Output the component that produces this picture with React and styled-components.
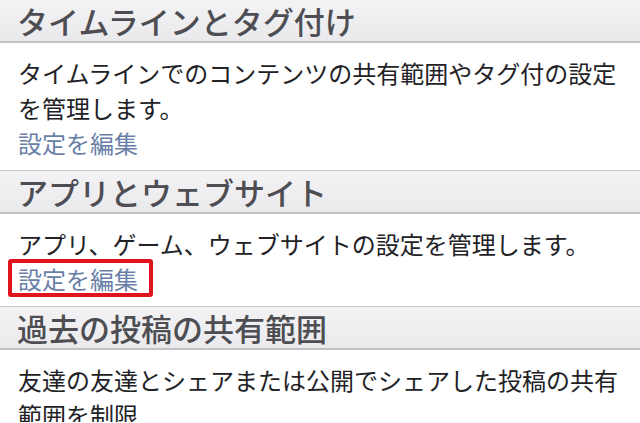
import React from 'react';
import styled, { createGlobalStyle } from 'styled-components';

const GlobalStyle = createGlobalStyle`
  html, body {
    margin: 0;
    padding: 0;
    background: #ffffff;
    overflow: hidden;
  }
  body {
    font-family: "Noto Sans CJK JP", "Noto Sans", sans-serif;
  }
`;

const Page = styled.div`
  width: 640px;
  height: 423px;
  overflow: hidden;
  background: #ffffff;
  margin-top: -1px;
`;

const SectionHeader = styled.div`
  height: 44px;
  box-sizing: border-box;
  display: flex;
  align-items: center;
  padding: 0 17px 1px;
  background: linear-gradient(#f3f3f5, #eaeaed);
  border-top: 1px solid #c9c9cd;
  border-bottom: 2px solid #c2c2c6;
  color: #4d4d52;
  font-size: 31px;
  font-weight: 500;
  letter-spacing: 0;
  line-height: 1;
`;

const Body = styled.div`
  padding: 12px 18px 10px;
  color: #222226;
  font-size: 24px;
  line-height: 35px;
`;

const Text = styled.p`
  margin: 0;
`;

const EditLink = styled.a`
  display: inline-block;
  position: relative;
  color: #6a7fa8;
  text-decoration: none;

  ${({ $marked }) =>
    $marked &&
    `
    &::after {
      content: "";
      position: absolute;
      left: -10px;
      right: -15px;
      top: -2px;
      bottom: -1px;
      border: 4px solid #e1131c;
      border-radius: 3px;
    }
  `}
`;

const sections = [
  {
    title: 'タイムラインとタグ付け',
    text: 'タイムラインでのコンテンツの共有範囲やタグ付の設定を管理します。',
    link: true,
  },
  {
    title: 'アプリとウェブサイト',
    text: 'アプリ、ゲーム、ウェブサイトの設定を管理します。',
    link: true,
    marked: true,
  },
  {
    title: '過去の投稿の共有範囲',
    text: '友達の友達とシェアまたは公開でシェアした投稿の共有範囲を制限',
  },
];

export default function App() {
  return (
    <>
      <GlobalStyle />
      <Page>
        {sections.map((s) => (
          <section key={s.title}>
            <SectionHeader>{s.title}</SectionHeader>
            <Body>
              <Text>{s.text}</Text>
              {s.link && <EditLink $marked={s.marked}>設定を編集</EditLink>}
            </Body>
          </section>
        ))}
      </Page>
    </>
  );
}
